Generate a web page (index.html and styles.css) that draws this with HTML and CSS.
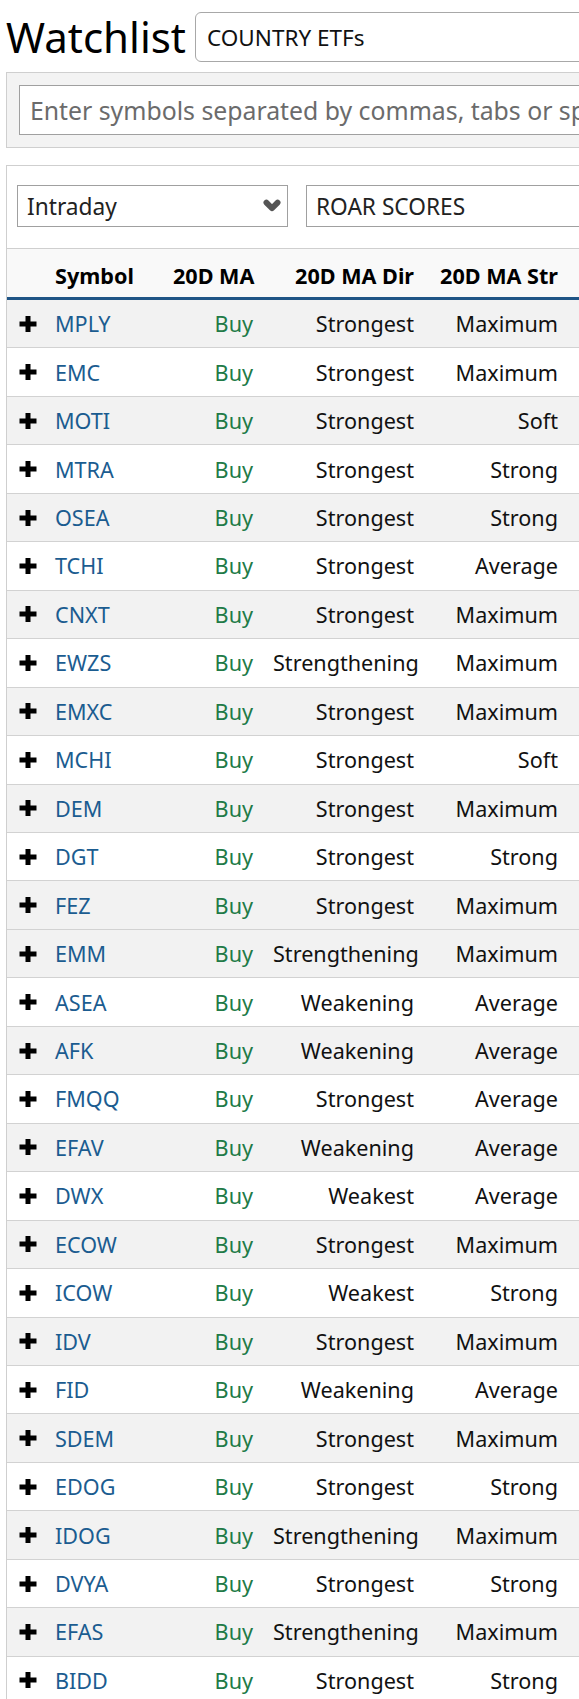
FILE: index.html
```html
<!DOCTYPE html>
<html lang="en">
<head>
<meta charset="utf-8">
<title>Watchlist</title>
<link rel="stylesheet" href="styles.css">
</head>
<body>
<div class="page">
  <header class="title-bar">
    <h1 class="title">Watchlist</h1>
    <input class="name-input" type="text" value="COUNTRY ETFs">
  </header>

  <section class="add-panel">
    <input class="symbols-input" type="text" placeholder="Enter symbols separated by commas, tabs or spaces">
  </section>

  <section class="list-panel">
    <div class="controls">
      <div class="select select-period">
        <span class="select-text">Intraday</span>
        <svg class="chevron" width="18" height="14" viewBox="0 0 18 14"><polyline points="3.4,3.6 9,9.2 14.6,3.6" fill="none" stroke="#555" stroke-width="5.8" stroke-linecap="round" stroke-linejoin="round"/></svg>
      </div>
      <div class="select select-view">
        <span class="select-text">ROAR SCORES</span>
      </div>
    </div>

    <div class="grid">
      <div class="row head">
        <div class="cell"></div>
        <div class="cell">Symbol</div>
        <div class="cell num">20D MA</div>
        <div class="cell num">20D MA Dir</div>
        <div class="cell num">20D MA Str</div>
      </div>
      <div id="rows"></div>
    </div>
  </section>
</div>
<script src="app.js"></script>
</body>
</html>
```

FILE: app.js
```js
var data = [
  ["MPLY","Strongest","Maximum"],
  ["EMC","Strongest","Maximum"],
  ["MOTI","Strongest","Soft"],
  ["MTRA","Strongest","Strong"],
  ["OSEA","Strongest","Strong"],
  ["TCHI","Strongest","Average"],
  ["CNXT","Strongest","Maximum"],
  ["EWZS","Strengthening","Maximum"],
  ["EMXC","Strongest","Maximum"],
  ["MCHI","Strongest","Soft"],
  ["DEM","Strongest","Maximum"],
  ["DGT","Strongest","Strong"],
  ["FEZ","Strongest","Maximum"],
  ["EMM","Strengthening","Maximum"],
  ["ASEA","Weakening","Average"],
  ["AFK","Weakening","Average"],
  ["FMQQ","Strongest","Average"],
  ["EFAV","Weakening","Average"],
  ["DWX","Weakest","Average"],
  ["ECOW","Strongest","Maximum"],
  ["ICOW","Weakest","Strong"],
  ["IDV","Strongest","Maximum"],
  ["FID","Weakening","Average"],
  ["SDEM","Strongest","Maximum"],
  ["EDOG","Strongest","Strong"],
  ["IDOG","Strengthening","Maximum"],
  ["DVYA","Strongest","Strong"],
  ["EFAS","Strengthening","Maximum"],
  ["BIDD","Strongest","Strong"]
];
var plus = '<svg class="plus" width="18" height="16" viewBox="0 0 18 16"><rect x="0.5" y="5.5" width="17" height="5" fill="#000"/><rect x="6.5" y="0" width="5" height="16" fill="#000"/></svg>';
var html = "";
data.forEach(function (r, i) {
  var n = i + 1;
  var striped = n <= 13 ? (n % 2 === 1) : (n % 2 === 0);
  var cls = "row" + (striped ? " stripe" : "");
  html += '<div class="' + cls + '">' +
    '<div class="cell icon">' + plus + '</div>' +
    '<div class="cell"><a class="sym" href="#">' + r[0] + '</a></div>' +
    '<div class="cell num buy">Buy</div>' +
    '<div class="cell num">' + r[1] + '</div>' +
    '<div class="cell num">' + r[2] + '</div>' +
    '</div>';
});
document.getElementById("rows").innerHTML = html;
```

FILE: styles.css
```css
html, body {
  margin: 0;
  padding: 0;
  overflow: hidden;
  background: #fff;
}
body {
  font-family: "Noto Sans", "Open Sans", sans-serif;
  font-size: 21.6px;
  color: #111;
}
.page {
  width: 1100px;
}
.title-bar {
  display: flex;
  align-items: center;
  gap: 9px;
  padding: 12px 0 10px 6px;
}
.title {
  margin: 0;
  font-size: 42px;
  font-weight: 400;
  line-height: 50px;
  color: #000;
}
.name-input {
  box-sizing: border-box;
  width: 800px;
  height: 50px;
  border: 1px solid #a8a8a8;
  border-radius: 6px;
  padding: 0 11px;
  font-family: inherit;
  font-size: 22.5px;
  color: #111;
  background: #fff;
  outline: none;
}
.add-panel {
  margin-left: 6px;
  background: #f3f3f3;
  border: 1px solid #cfcfcf;
  padding: 12px;
}
.symbols-input {
  box-sizing: border-box;
  display: block;
  width: 900px;
  height: 50px;
  border: 1px solid #a0a0a0;
  padding: 0 10px;
  font-family: inherit;
  font-size: 24.8px;
  background: #fff;
  outline: none;
}
.symbols-input::placeholder {
  color: #6b6b6b;
}
.list-panel {
  margin: 17px 0 0 6px;
  border-left: 1px solid #cfcfcf;
  border-top: 1px solid #cfcfcf;
}
.controls {
  display: flex;
  gap: 18px;
  padding: 19px 10px 21px 10px;
}
.select {
  box-sizing: border-box;
  height: 42px;
  border: 1px solid #a0a0a0;
  display: flex;
  align-items: center;
  justify-content: space-between;
  padding: 0 6px 0 9px;
  background: #fff;
  color: #222;
  font-size: 22.7px;
}
.select-period {
  width: 271px;
}
.select-view {
  width: 500px;
}
.chevron {
  display: block;
}
.grid {
  width: 100%;
}
.row {
  display: grid;
  grid-template-columns: 38px 118px 100px 161px 144px 1fr;
  align-items: center;
  box-sizing: border-box;
  height: 48.46px;
  border-bottom: 1px solid #d2d2d2;
  background: #fff;
}
.row.head {
  height: 52px;
  padding-top: 4px;
  border-top: 1px solid #cfcfcf;
  border-bottom: 3px solid #1f5586;
  background: #f9f9f9;
  font-weight: 700;
  color: #000;
}
.row.stripe {
  background: #f2f2f2;
}
.cell {
  padding: 0 10px;
  white-space: nowrap;
}
.cell.num {
  text-align: right;
}
.cell.icon {
  padding: 0 0 0 12px;
  display: flex;
  align-items: center;
}
.plus {
  display: block;
}
.sym {
  color: #1b5c90;
  text-decoration: none;
}
.buy {
  color: #217a47;
}
```
